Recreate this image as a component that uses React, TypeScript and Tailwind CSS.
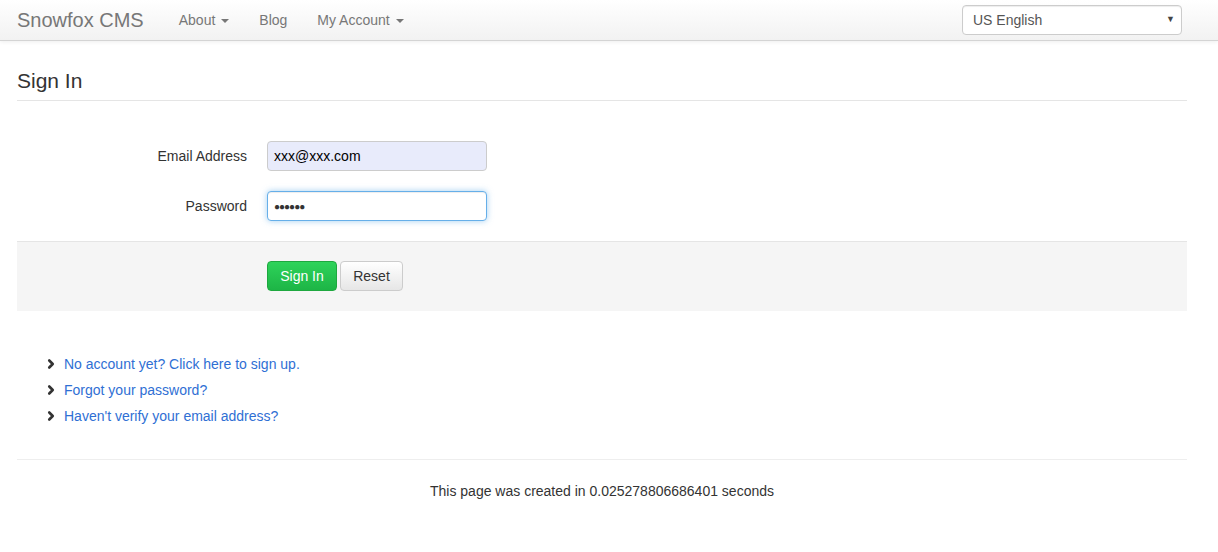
import { ChevronRight } from "lucide-react";

const caret = <span className="ml-[6px] inline-block h-0 w-0 border-x-[4px] border-t-[4px] border-x-transparent border-t-[#777] align-middle" />;

const links = [
  "No account yet? Click here to sign up.",
  "Forgot your password?",
  "Haven't verify your email address?",
];

export default function App() {
  return (
    <div className="min-h-[552px] bg-white font-['Liberation_Sans',Arial,sans-serif] text-[14px] text-[#333]">
      <nav className="h-[41px] border-b border-[#d4d4d4] bg-gradient-to-b from-white to-[#f2f2f2] shadow-[0_1px_4px_rgba(0,0,0,0.07)]">
        <div className="flex h-[40px] w-[1187px] items-center pl-[17px]">
          <span className="text-[20px] leading-[40px] text-[#777]">Snowfox CMS</span>
          <ul className="ml-[20px] flex items-center text-[14px] text-[#777]">
            <li className="px-[15px] leading-[40px]">About{caret}</li>
            <li className="px-[15px] leading-[40px]">Blog</li>
            <li className="px-[15px] leading-[40px]">My Account{caret}</li>
          </ul>
          <div className="ml-auto mr-[5px] flex h-[30px] w-[220px] items-center justify-between rounded-[4px] border border-[#ccc] bg-white pl-[10px] pr-[6px] shadow-[inset_0_1px_1px_rgba(0,0,0,0.075)]">
            <span className="text-[14px] text-[#555]">US English</span>
            <span className="text-[9px] text-[#444]">▼</span>
          </div>
        </div>
      </nav>

      <main className="w-[1187px] pl-[17px]">
        <h1 className="mt-[27px] border-b border-[#e5e5e5] pb-[6px] text-[21px] leading-[26px] text-[#333]">Sign In</h1>

        <form className="mt-[40px]">
          <div className="flex items-center">
            <label className="w-[230px] text-right">Email Address</label>
            <div className="ml-[20px] flex h-[30px] w-[220px] items-center rounded-[4px] border border-[#ccc] bg-[#e8ebfb] px-[6px] text-[14px] text-black">xxx@xxx.com</div>
          </div>
          <div className="mt-[20px] flex items-center">
            <label className="w-[230px] text-right">Password</label>
            <div className="ml-[20px] flex h-[30px] w-[220px] items-center rounded-[4px] border border-[#66afe9] bg-white px-[6px] text-[10px] tracking-[-1px] text-[#333] shadow-[inset_0_1px_1px_rgba(0,0,0,0.075),0_0_6px_rgba(102,175,233,0.6)]">●●●●●●</div>
          </div>
          <div className="mt-[20px] flex h-[70px] items-start border-t border-[#e5e5e5] bg-[#f5f5f5] pl-[250px] pt-[19px]">
            <button type="button" className="h-[30px] w-[70px] rounded-[4px] border border-[#1ea83f] bg-gradient-to-b from-[#2ed35a] to-[#1db546] text-[14px] text-white">Sign In</button>
            <button type="button" className="ml-[3px] h-[30px] w-[63px] rounded-[4px] border border-[#ccc] bg-gradient-to-b from-white to-[#e6e6e6] text-[14px] text-[#333]">Reset</button>
          </div>
        </form>

        <ul className="mt-[40px] pl-[28px]">
          {links.map((t) => (
            <li key={t} className="flex h-[26px] items-center">
              <ChevronRight size={14} strokeWidth={4.5} className="mr-[6px] -ml-[1px] text-[#333]" />
              <a className="text-[#2f6fd4]">{t}</a>
            </li>
          ))}
        </ul>

        <div className="mt-[30px] border-t border-[#eee] pt-[21px] text-center">
          This page was created in 0.025278806686401 seconds
        </div>
      </main>
    </div>
  );
}
